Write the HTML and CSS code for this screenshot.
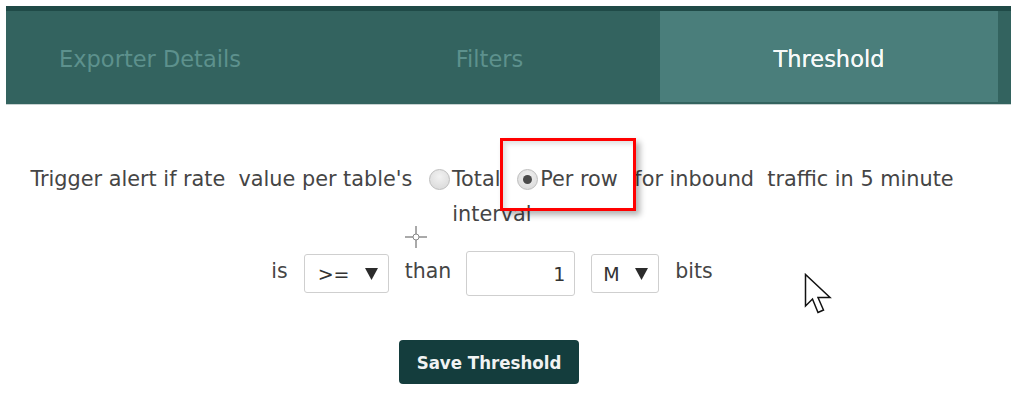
FILE: index.html
```html
<!DOCTYPE html>
<html lang="en">
<head>
<meta charset="utf-8">
<title>Threshold</title>
<link rel="stylesheet" href="styles.css">
</head>
<body>
<div class="tabs">
  <div class="tab first">Exporter Details</div>
  <div class="tab">Filters</div>
  <div class="tab active">Threshold</div>
</div>
<div class="panel">
  <p class="sentence">Trigger alert if rate&nbsp; value per table's <label class="opt"><span class="radio"></span>Total</label> <label class="opt sel"><span class="radio checked"></span>Per row<span class="mark"></span></label> for inbound&nbsp; traffic in 5 minute<br>interval</p>
  <div class="cond">
    <span class="word">is</span>
    <div class="sel-box op"><span>&gt;=</span><svg class="caret" width="13" height="12" viewBox="0 0 13 12"><path d="M0 0H13L6.5 12Z" fill="#2b2b2b"/></svg></div>
    <span class="word">than</span>
    <input class="num" type="text" value="1">
    <div class="sel-box unit"><span>M</span><svg class="caret" width="13" height="12" viewBox="0 0 13 12"><path d="M0 0H13L6.5 12Z" fill="#2b2b2b"/></svg></div>
    <span class="word">bits</span>
  </div>
  <div class="actions"><button class="save" type="button">Save Threshold</button></div>
</div>
<svg class="crosshair" width="24" height="24" viewBox="0 0 24 24"><path d="M12 1V9M12 15V23M1 12H9M15 12H23" stroke="#555" stroke-width="1" fill="none"/><circle cx="12" cy="12" r="3" stroke="#888" stroke-width="1" fill="none"/></svg>
<svg class="pointer" width="30" height="44" viewBox="0 0 30 44"><path d="M1.5 1.5V33L8.5 26L14 39.5L19.5 37L14 24.5H26Z" fill="#fff" stroke="#111" stroke-width="1.5" stroke-linejoin="miter"/></svg>
</body>
</html>
```
FILE: styles.css
```css
* { box-sizing: border-box; }
body {
  margin: 0;
  background: #fff;
  font-family: "DejaVu Sans", Verdana, sans-serif;
  color: #454545;
  position: relative;
  width: 1024px;
  height: 395px;
  overflow: hidden;
}
.tabs {
  display: flex;
  margin: 6px 13px 0 6px;
  height: 98px;
  background: #33635f;
  border-top: 5px solid #1f4a47;
  padding-bottom: 2px;
  box-shadow: 0 1px 0 #c8d2d1;
}
.tab {
  width: 339px;
  display: flex;
  align-items: center;
  justify-content: center;
  padding-top: 5px;
  font-size: 22.5px;
  color: #5d918d;
}
.tab.first { width: 314px; padding-right: 26px; }
.tab.active { background: #4a7e7b; color: #f7f9f9; width: 338px; margin-left: 1px; text-shadow: 0 0 0.4px #fff; }
.panel {
  width: 972px;
  margin-left: 6px;
  text-align: center;
}
.sentence {
  margin: 58px 0 0;
  font-size: 20.8px;
  line-height: 35px;
}
.opt { margin-left: 10px; position: relative; }
.opt.sel { margin-right: 10px; }
.radio {
  display: inline-block;
  width: 21px;
  height: 21px;
  margin-right: 2px;
  border-radius: 50%;
  border: 1px solid #bdbdbd;
  background: radial-gradient(circle at 50% 35%, #f2f2f2, #d6d6d6);
  vertical-align: middle;
  position: relative;
  top: -1px;
}
.radio.checked::after {
  content: "";
  position: absolute;
  left: 5px; top: 5px;
  width: 9px; height: 9px;
  border-radius: 50%;
  background: #4a4a4a;
}
.mark {
  position: absolute;
  left: -17px;
  right: -18px;
  top: -29px;
  bottom: -20px;
  border: 3px solid #f00;
  box-shadow: 4px 4px 6px rgba(0,0,0,0.3), inset 3px 3px 5px rgba(0,0,0,0.12);
  pointer-events: none;
}
.cond {
  margin-top: 19px;
  display: flex;
  justify-content: center;
  align-items: center;
  height: 45px;
  font-size: 20.5px;
}
.word { padding-bottom: 5px; }
.cond > * + * { margin-left: 16px; }
.sel-box {
  height: 39px;
  border: 1px solid #cfcfcf;
  border-radius: 3px;
  display: flex;
  align-items: center;
  justify-content: space-between;
  font-size: 19px;
  color: #333;
  padding: 0 10px 0 13px;
}
.sel-box.op { width: 85px; }
.sel-box.unit { width: 68px; padding-left: 11px; }
.caret { display: block; }
.num {
  width: 109px;
  height: 45px;
  border: 1px solid #cfcfcf;
  border-radius: 3px;
  text-align: right;
  padding: 0 9px 0 0;
  font-family: "DejaVu Sans", Verdana, sans-serif;
  font-size: 19px;
  color: #333;
  margin-left: 15px;
}
.actions { margin-top: 44px; display: flex; justify-content: center; padding-right: 6px; }
.save {
  width: 180px;
  height: 44px;
  background: #143d3d;
  color: #f1f3f3;
  border: 0;
  border-radius: 4px;
  font-family: "DejaVu Sans Condensed", "DejaVu Sans", sans-serif;
  font-stretch: condensed;
  font-weight: bold;
  font-size: 18.5px;
}
.crosshair { position: absolute; left: 404px; top: 225px; }
.pointer { position: absolute; left: 804px; top: 273px; }
```
